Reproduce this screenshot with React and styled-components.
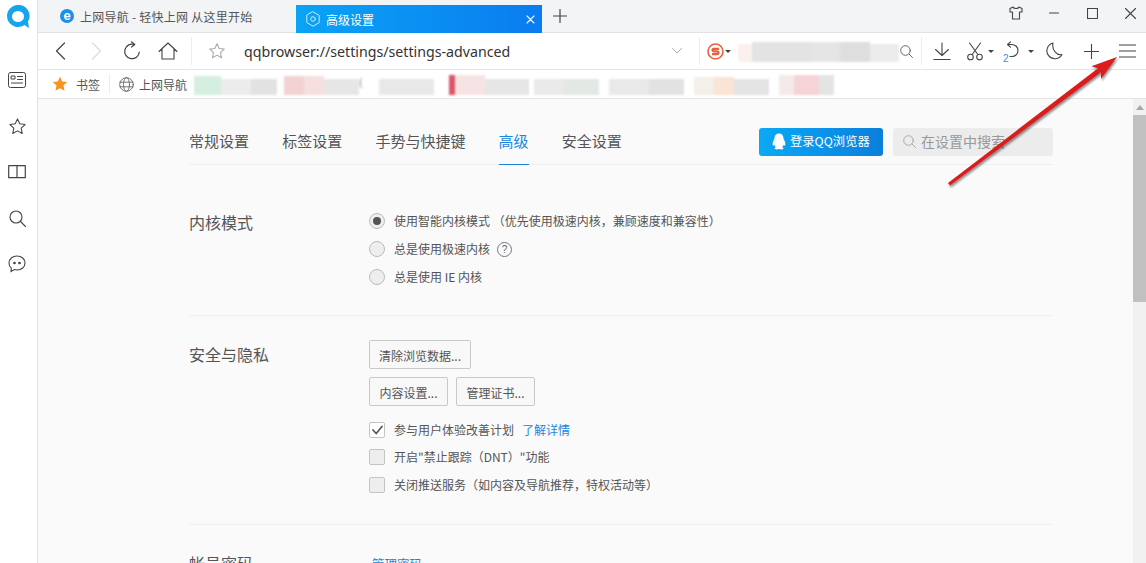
import React from "react";
import styled, { createGlobalStyle } from "styled-components";

const Global = createGlobalStyle`
  html, body { margin: 0; padding: 0; height: 100%; overflow: hidden; background: #fafafa; }
  #root { height: 100%; }
  * { box-sizing: border-box; }
`;
const FONT = `"Noto Sans CJK SC", "Noto Sans", sans-serif`;

const Window = styled.div`
  position: relative; display: flex; width: 1146px; height: 563px; overflow: hidden;
  font-family: ${FONT}; color: #555; background: #fafafa;
`;
const Rail = styled.aside`
  flex: 0 0 38px; display: flex; flex-direction: column; align-items: center;
  padding: 4px 1px 0 0; background: #fff; border-right: 1px solid #e2e2e2;
`;
const RailLogo = styled.div`height: 26px; margin-bottom: 27px; display: flex;`;
const RailItem = styled.div`
  flex: 0 0 46px; width: 34px; align-self: flex-start; display: flex; align-items: center; justify-content: center; color: #444;
`;
const Main = styled.div`flex: 1; min-width: 0; display: flex; flex-direction: column;`;

const TabStrip = styled.div`
  flex: 0 0 33px; display: flex; align-items: flex-end; background: #f3f4f6; border-bottom: 1px solid #e3e3e3;
`;
const Tab = styled.div`
  display: flex; align-items: center; height: ${p => (p.$active ? 28 : 32)}px; width: ${p => p.$w}px;
  padding-left: ${p => p.$pad}px; font-size: 12px; white-space: nowrap;
  color: ${p => (p.$active ? "#fff" : "#555")};
  background: ${p => (p.$active ? "linear-gradient(90deg,#0aa3f5,#0a7cf0)" : "transparent")};
  margin-bottom: ${p => (p.$active ? -1 : 0)}px;
`;
const TabLabel = styled.span`margin-left: ${p => p.$ml}px; flex: 1; letter-spacing: ${p => p.$ls || 0}px;`;
const TabClose = styled.span`display: flex; margin-right: 7px;`;
const Favicon = styled.span`
  width: 14px; height: 14px; border-radius: 50%; background: #1c8fe6; color: #fff; display: flex;
  align-items: center; justify-content: center; font: bold 13px/14px "Liberation Sans", sans-serif;
`;
const NewTab = styled.div`width: 36px; height: 32px; display: flex; align-items: center; justify-content: center; color: #444;`;
const WindowControls = styled.div`margin: 0 -3px 0 auto; display: flex; height: 32px; align-self: flex-start;`;
const WinBtn = styled.div`width: 38px; height: 26px; display: flex; align-items: center; justify-content: center; color: #444;`;

const Toolbar = styled.div`
  flex: 0 0 37px; display: flex; align-items: center; padding-left: 4px; background: #fff; border-bottom: 1px solid #e4e4e4;
`;
const Cell = styled.div`
  flex: 0 0 ${p => p.$w}px; height: 36px; display: flex; align-items: center; justify-content: center;
  color: ${p => p.$c || "#444"}; position: relative;
`;
const VSep = styled.div`flex: 0 0 1px; height: 28px; background: #ececec; margin-left: ${p => p.$ml || 0}px;`;
const UrlText = styled.div`
  flex: 0 0 ${p => p.$w}px; font: 14.2px "Noto Sans", sans-serif; color: #333; margin-left: 15px; white-space: nowrap;
`;
const Badge = styled.span`position: absolute; left: 9px; top: 20px; font: 10px "Liberation Sans", sans-serif; color: #3d8fdc;`;
const Caret = styled.i`width: 0; height: 0; border: 3px solid transparent; border-top: 3px solid #444; border-bottom: 0;`;
const Smudge = styled.div`
  flex: 0 0 ${p => p.$w}px; height: 22px; display: flex; align-items: flex-end; overflow: hidden; filter: blur(1px);
`;
const Chip = styled.span`
  flex: 0 0 ${p => p.$w}px; height: ${p => p.$h || 16}px; background: ${p => p.$c};
  font-size: 10px; line-height: 10px; color: #777;
`;

const BookBar = styled.div`
  flex: 0 0 29px; display: flex; align-items: center; padding-left: 13px; background: #fff; border-bottom: 1px solid #e4e4e4;
  font-size: 12px; color: #555;
`;
const BookLabel = styled.span`margin-left: ${p => p.$ml}px; white-space: nowrap;`;

const Body = styled.div`flex: 1; min-height: 0; display: flex; overflow: hidden;`;
const Page = styled.main`flex: 1; min-width: 0; padding: 29px 80px 0 151px; background: #fafafa;`;
const Scrollbar = styled.div`flex: 0 0 13px; background: #f1f1f1; display: flex; flex-direction: column; align-items: center;`;
const ScrollArrow = styled.div`
  flex: 0 0 16px; display: flex; align-items: center; justify-content: center;
  &::before { content: ""; border: 4px solid transparent; border-bottom: 5px solid #a8a8a8; border-top: 0; }
`;
const ScrollThumb = styled.div`width: 100%; height: 187px; background: #c1c1c1;`;

const Nav = styled.nav`display: flex; align-items: stretch; height: 37px; border-bottom: 1px solid #efefef;`;
const NavItem = styled.a`
  margin-right: 33.2px; height: 36px; line-height: 25px; font-size: 15px; color: ${p => (p.$active ? "#1a86e0" : "#555")};
  border-bottom: 1px solid ${p => (p.$active ? "#1a86e0" : "transparent")}; box-sizing: content-box;
`;
const LoginBtn = styled.button`
  margin-left: auto; width: 124px; height: 28px; border: 0; border-radius: 3px; padding: 0 0 2px 12px;
  display: flex; align-items: center; gap: 3px; color: #fff; font: 12.3px ${FONT};
  background: linear-gradient(90deg,#0aa9f6,#0a7fdc);
`;
const SearchBox = styled.div`
  margin-left: 10px; width: 160px; height: 28px; border-radius: 3px; background: #ececec; color: #999;
  display: flex; align-items: center; gap: 5px; padding: 0 0 2px 10px; font-size: 14px;
`;

const Section = styled.section`
  display: flex; padding: ${p => p.$top}px 0 24px; border-bottom: 1px solid #f0f0f0;
`;
const SectionTitle = styled.h2`
  flex: 0 0 180px; margin: 0; font-size: 16px; font-weight: 400; color: #555; line-height: ${p => p.$lh}px;
`;
const Options = styled.div`display: flex; flex-direction: column; align-items: flex-start;`;
const Row = styled.div`display: flex; align-items: center; height: ${p => p.$h || 28}px; font-size: 12px; color: #555; white-space: nowrap;`;
const RowText = styled.span`padding-bottom: ${p => p.$pb ?? 2}px; display: flex; align-items: center;`;
const Radio = styled.span`
  width: 16px; height: 16px; border-radius: 50%; border: 1px solid #bbb; background: #eee; margin-right: 9px;
  display: flex; align-items: center; justify-content: center;
  &::after { content: ""; width: 8px; height: 8px; border-radius: 50%; background: ${p => (p.$on ? "#555" : "transparent")}; }
`;
const Check = styled.span`
  width: 16px; height: 16px; border-radius: 2px; border: 1px solid #c4c4c4; background: ${p => (p.$on ? "#fff" : "#eee")};
  margin-right: 9px; display: flex; align-items: center; justify-content: center;
`;
const Help = styled.span`
  width: 15px; height: 15px; margin: 2px 0 0 7px; border: 1px solid #777; border-radius: 50%; color: #666;
  display: flex; align-items: center; justify-content: center; font: 10px "Liberation Sans", sans-serif;
`;
const ButtonRow = styled.div`display: flex; gap: 8px; margin-bottom: 8px;`;
const Btn = styled.button`
  width: ${p => p.$w}px; height: 29px; padding: 1px 0 0; border: 1px solid #c9c9c9; border-radius: 2px; background: #f8f8f8;
  color: #555; font: 12px ${FONT};
`;
const CheckList = styled.div`margin: 2px 0 1.5px;`;
const Link = styled.a`color: #1a86e0; margin-left: ${p => p.$ml || 0}px; font-size: ${p => p.$fs || 12}px;`;
const ArrowLayer = styled.svg`position: absolute; left: 0; top: 0; pointer-events: none;`;

const S = ({ w = 20, h = 20, vb = "0 0 20 20", sw = 1.2, children, ...r }) => (
  <svg width={w} height={h} viewBox={vb} fill="none" stroke="currentColor" strokeWidth={sw} strokeLinecap="round" strokeLinejoin="round" {...r}>{children}</svg>
);
const StarPath = "M10 2l2.4 5.2 5.6.7-4.1 3.9 1.1 5.6L10 14.6l-5 2.8 1.1-5.6L2 7.9l5.6-.7z";

const chips1 = [
  [27, "#d4efdf", 19], [30, "#ececec"], [26, "#e2e2e2"], [7, "transparent"], [20, "#f2d2d2", 19], [20, "#f5dfdf", 19], [35, "#e6e6e6"],
  [20, "transparent", 18, "("], [55, "#e8e8e8"], [15, "transparent"], [6, "#d8556a", 20], [30, "#f6e4e4", 20], [44, "#e6e6e6"],
  [5, "transparent"], [30, "#eaeaea"], [35, "#e3e8e4"], [10, "transparent"], [40, "#e9e9e9"], [35, "#e2e2e2"],
  [10, "transparent"], [20, "#f3efe9", 18], [20, "#fbe3d6", 18], [35, "#e4e4e4"], [10, "transparent"], [15, "#f4eaea", 20], [25, "#f6d3d6", 20], [15, "#e4e4e4", 20],
];

export default function App() {
  return (
    <Window>
      <Global />
      <Rail>
        <RailLogo>
          <svg width="24" height="26" viewBox="0 0 24 26">
            <path d="M12 1a11 11 0 1 0 6.5 19.9L23 24l-1-6.4A11 11 0 0 0 12 1z" fill="#18a3ee" />
            <ellipse cx="12" cy="12.5" rx="6" ry="5.6" fill="#fff" />
          </svg>
        </RailLogo>
        <RailItem><S w={18} h={16} vb="0 0 18 16" sw={1}><rect x=".5" y=".5" width="17" height="15" rx="2" /><rect x="3.5" y="4" width="3.5" height="3" /><path d="M9.5 4.5h5M9.5 7.5h5M3.5 11h11" /></S></RailItem>
        <RailItem><S w={19} h={19} sw={1.1}><path d={StarPath} /></S></RailItem>
        <RailItem><S w={18} h={14} vb="0 0 18 14" sw={1.2} strokeLinecap="butt"><path d="M.7.7h16.6v12H.7zM9 .7v12" /></S></RailItem>
        <RailItem><S w={17} h={17} vb="0 0 17 17" sw={1.1}><circle cx="7" cy="7" r="6" /><path d="M11.5 11.5l5 5" /></S></RailItem>
        <RailItem>
          <svg width="18" height="18" viewBox="0 0 18 18" fill="none" stroke="currentColor" strokeWidth="1.1"><path d="M9 1c4.6 0 8 3 8 7s-3.4 7-8 7c-.9 0-1.8-.1-2.600-.4L3 16.500l.3-3.400C1.900 11.900 1 10.100 1 8c0-4 3.400-7 8-7z" /><circle cx="6.500" cy="8" r=".8" fill="currentColor" /><circle cx="11.500" cy="8" r=".8" fill="currentColor" /></svg>
        </RailItem>
      </Rail>
      <Main>
        <TabStrip>
          <Tab $w={258} $pad={22}>
            <Favicon>e</Favicon>
            <TabLabel $ml={6} $ls={.25}>上网导航 - 轻快上网 从这里开始</TabLabel>
          </Tab>
          <Tab $active $w={246} $pad={9}>
            <S w={16} h={16} vb="0 0 16 16" sw={1} style={{ color: "#cfeaff" }}><path d="M8 .8l6.200 3.600v7.200L8 15.200l-6.200-3.600V4.400z" /><circle cx="8" cy="8" r="2.300" /></S>
            <TabLabel $ml={5}>高级设置</TabLabel>
            <TabClose><S w={9} h={9} vb="0 0 9 9" sw={1.1}><path d="M1 1l7 7M8 1L1 8" /></S></TabClose>
          </Tab>
          <NewTab><S w={14} h={14} vb="0 0 14 14" sw={1.2}><path d="M7 .5v13M.5 7h13" /></S></NewTab>
          <WindowControls>
            <WinBtn><S w={14} h={14} vb="0 0 14 14" sw={1.1}><path d="M4 1L1 2.500V6h2.500v7h7V6H13V2.500L10 1c-.5 2-5.500 2-6 0z" /></S></WinBtn>
            <WinBtn><S w={10} h={10} vb="0 0 10 10" sw={1.1}><path d="M.5 5h9" /></S></WinBtn>
            <WinBtn><S w={11} h={11} vb="0 0 11 11" sw={1.1} strokeLinecap="butt"><rect x=".5" y=".5" width="10" height="10" /></S></WinBtn>
            <WinBtn><S w={11} h={11} vb="0 0 11 11" sw={1.1}><path d="M.5.5l10 10M10.500.5l-10 10" /></S></WinBtn>
          </WindowControls>
        </TabStrip>
        <Toolbar>
          <Cell $w={36}><S w={11} h={18} vb="0 0 11 18" sw={1.2}><path d="M9.500 1L1.500 9l8 8" /></S></Cell>
          <Cell $w={36} $c="#ddd"><S w={11} h={18} vb="0 0 11 18" sw={1.2}><path d="M1.500 1l8 8-8 8" /></S></Cell>
          <Cell $w={36}><S w={18} h={20} vb="0 0 18 20" sw={1.2}><path d="M11.500 3.500A7.300 7.300 0 1 0 16.300 11" /><path d="M8.500 .8l3.200 2.700-3.200 2.500" /></S></Cell>
          <Cell $w={36}><S w={20} h={18} vb="0 0 20 18" sw={1.1}><path d="M1 9.500L10 1l9 8.500M4 7.500V17h12V7.500" /></S></Cell>
          <VSep $ml={5} />
          <Cell $w={24} $c="#aaa" style={{ marginLeft: 13 }}><S w={18} h={18}><path d={StarPath} /></S></Cell>
          <UrlText $w={417}>qqbrowser://settings/settings-advanced</UrlText>
          <Cell $w={22} $c="#aaa" style={{ marginLeft: 5 }}><S w={10} h={6} vb="0 0 10 6" sw={1}><path d="M.5.5L5 5 9.500.5" /></S></Cell>
          <VSep $ml={11} />
          <Cell $w={38} style={{ justifyContent: "flex-start", paddingLeft: 7, gap: 1 }}>
            <svg width="17" height="17" viewBox="0 0 17 17"><circle cx="8.500" cy="8.500" r="7.500" fill="none" stroke="#e8603c" strokeWidth="1.600" /><path d="M12 5.800H7c-2 0-2 2.400 0 2.500h3c2 .2 2 2.900 0 2.900H5" fill="none" stroke="#e8603c" strokeWidth="2.200" /></svg>
            <Caret />
          </Cell>
          <Smudge $w={161}>
            <Chip $w={14} $c="#fbf0ee" $h={18} />
            <Chip $w={60} $c="#e3e3e3" $h={20} />
            <Chip $w={28} $c="#e5e5e5" $h={20} />
            <Chip $w={30} $c="#dedede" $h={20} />
            <Chip $w={29} $c="#ececec" $h={18} />
          </Smudge>
          <Cell $w={14} $c="#666"><S w={13} h={13} vb="0 0 13 13" sw={1}><circle cx="5.500" cy="5.500" r="4.800" /><path d="M9 9l3.500 3.500" /></S></Cell>
          <VSep $ml={8} />
          <Cell $w={40}><S w={18} h={19} vb="0 0 18 19" sw={1.1}><path d="M9 1v12M2.500 7.500L9 13.500l6.500-6M.8 17.500h16.400" /></S></Cell>
          <Cell $w={26}><S w={18} h={19} vb="0 0 18 19" sw={1.1}><path d="M3.500 1l8 11M14.500 1l-8 11" /><circle cx="4.500" cy="15" r="2.800" /><circle cx="13.500" cy="15" r="2.800" /></S></Cell>
          <Cell $w={6}><Caret /></Cell>
          <Cell $w={34} style={{ justifyContent: "flex-start", paddingLeft: 10 }}>
            <S w={16} h={20} vb="0 0 16 20" sw={1.1}><path d="M4 3.500h4a6 6 0 0 1 0 12H6" /><path d="M6.500.8L3.500 3.500l3 2.700" /></S>
            <Badge>2</Badge>
          </Cell>
          <Cell $w={6}><Caret /></Cell>
          <Cell $w={40}><S w={17} h={18} vb="0 0 17 18" sw={1.1}><path d="M7 1a8 8 0 1 0 9 11.500C11 14 5.500 8 7 1z" /></S></Cell>
          <Cell $w={34}><S w={15} h={15} vb="0 0 15 15" sw={1.1}><path d="M7.500 0v15M0 7.500h15" /></S></Cell>
          <Cell $w={38}><S w={17} h={14} vb="0 0 17 14" sw={1.1} strokeLinecap="butt"><path d="M0 1h17M0 7h17M0 13h17" /></S></Cell>
        </Toolbar>
        <BookBar>
          <svg width="18" height="18" viewBox="0 0 20 20"><path d={StarPath} fill="#f7941d" /></svg>
          <BookLabel $ml={7}>书签</BookLabel>
          <VSep $ml={9} style={{ height: 20 }} />
          <BookLabel $ml={9} style={{ display: "flex", color: "#666" }}><S w={15} h={15} vb="0 0 15 15" sw={.9}><circle cx="7.500" cy="7.500" r="6.800" /><ellipse cx="7.500" cy="7.500" rx="3" ry="6.800" /><path d="M1 5.200h13M1 9.800h13" /></S></BookLabel>
          <BookLabel $ml={5}>上网导航</BookLabel>
          <Smudge $w={640} style={{ marginLeft: 7 }}>
            {chips1.map(([w, c, h, t], i) => <Chip key={i} $w={w} $c={c} $h={h}>{t}</Chip>)}
          </Smudge>
        </BookBar>
        <Body>
          <Page>
            <Nav>
              <NavItem>常规设置</NavItem>
              <NavItem>标签设置</NavItem>
              <NavItem>手势与快捷键</NavItem>
              <NavItem $active>高级</NavItem>
              <NavItem>安全设置</NavItem>
              <LoginBtn>
                <svg width="16" height="17" viewBox="0 0 16 17"><path d="M8 .5c3 0 4.500 2.300 4.500 5 1.500 3 2.500 5.500 1.500 7-.5.500-1.200-.3-1.500-1 0 1-.5 2-1.300 2.700 1 .5 1.500 1 1.300 1.600-.4.700-3 .8-4.500.2-1.500.6-4.100.5-4.500-.2-.2-.6.300-1.100 1.300-1.600-.8-.7-1.300-1.700-1.300-2.700-.3.700-1 1.500-1.500 1-1-1.500 0-4 1.500-7 0-2.700 1.500-5 4.500-5z" fill="#fff" /></svg>
                登录QQ浏览器
              </LoginBtn>
              <SearchBox>
                <S w={13} h={13} vb="0 0 13 13" sw={1} style={{ color: "#aaa" }}><circle cx="5.500" cy="5.500" r="4.800" /><path d="M9 9l3.500 3.500" /></S>
                在设置中搜索
              </SearchBox>
            </Nav>
            <Section $top={42}>
              <SectionTitle $lh={30}>内核模式</SectionTitle>
              <Options>
                <Row><Radio $on /><RowText>使用智能内核模式 （优先使用极速内核，兼顾速度和兼容性）</RowText></Row>
                <Row><Radio /><RowText>总是使用极速内核<Help>?</Help></RowText></Row>
                <Row><Radio /><RowText>总是使用 IE 内核</RowText></Row>
              </Options>
            </Section>
            <Section $top={24}>
              <SectionTitle $lh={28}>安全与隐私</SectionTitle>
              <Options>
                <ButtonRow><Btn $w={102}>清除浏览数据...</Btn></ButtonRow>
                <ButtonRow>
                  <Btn $w={79}>内容设置...</Btn>
                  <Btn $w={79}>管理证书...</Btn>
                </ButtonRow>
                <CheckList>
                  <Row $h={27.5}><Check $on><S w={11} h={10} vb="0 0 11 10" sw={1.7} style={{ color: "#555" }}><path d="M1 5l3.200 3.500L10 1.500" /></S></Check><RowText $pb={1}>参与用户体验改善计划<Link $ml={8}>了解详情</Link></RowText></Row>
                  <Row $h={27.5}><Check /><RowText $pb={1}>开启"禁止跟踪（DNT）"功能</RowText></Row>
                  <Row $h={27.5}><Check /><RowText $pb={1}>关闭推送服务（如内容及导航推荐，特权活动等）</RowText></Row>
                </CheckList>
              </Options>
            </Section>
            <Section $top={24}>
              <SectionTitle $lh={28}>帐号密码</SectionTitle>
              <Options><Row><Link $fs={12.5} $ml={3}>管理密码</Link></Row></Options>
            </Section>
          </Page>
          <Scrollbar>
            <ScrollArrow />
            <ScrollThumb />
          </Scrollbar>
        </Body>
      </Main>
      <ArrowLayer width="1146" height="563" viewBox="0 0 1146 563">
        <defs><filter id="sh" x="-10%" y="-10%" width="120%" height="120%"><feDropShadow dx="1" dy="2" stdDeviation="1.200" floodColor="#000" floodOpacity=".45" /></filter></defs>
        <polygon points="948,183 950,185.500 1101,72.300 1101,79.100 1117,57 1091.400,66.300 1098,68.300" fill="#d91c1c" filter="url(#sh)" />
      </ArrowLayer>
    </Window>
  );
}
